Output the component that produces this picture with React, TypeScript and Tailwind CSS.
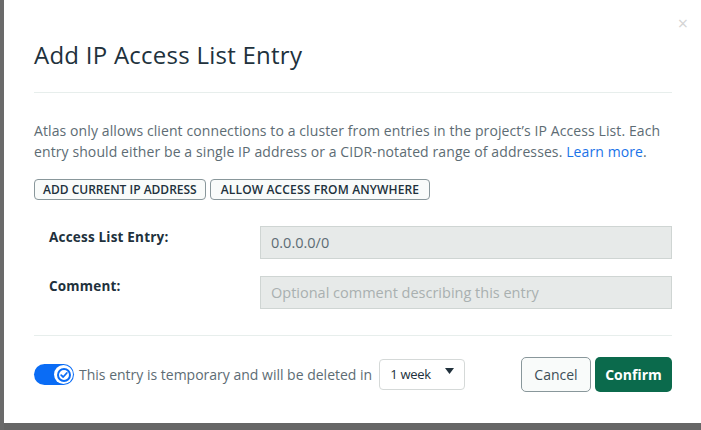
import React from "react"

const font = { fontFamily: "'Open Sans', 'Noto Sans', sans-serif" }

export default function App() {
  return (
    <div className="flex h-[430px] w-[701px] overflow-hidden bg-[#666666]" style={font}>
      <div className="flex w-[4px] shrink-0 flex-col bg-[#6a6a6a]" />
      <div className="relative mb-[7px] flex w-[720px] shrink-0 flex-col bg-white pl-[30px] pr-[49px]">
        <button className="absolute right-[36px] top-[14px] text-[18px] leading-none text-[#d4d4d4]">×</button>
        <h1 className="pt-[39px] text-[24px] leading-[32px] tracking-[0.25px] text-[#21313c]">Add IP Access List Entry</h1>
        <div className="mt-[21px] h-px w-[638px] bg-[#e7eeec]" />
        <p className="mt-[27px] w-[660px] text-[14px] leading-[21px] tracking-[0.1px] text-[#5d6c74]">
          Atlas only allows client connections to a cluster from entries in the project’s IP Access List. Each
          <br />
          entry should either be a single IP address or a CIDR-notated range of addresses.{" "}
          <a className="text-[#1a73e8]">Learn more</a>.
        </p>
        <div className="mt-[17px] flex gap-[4px]">
          <button className="h-[21px] rounded-[4px] border border-[#89979b] bg-[#f9fbfa] px-[8px] text-[12px] font-semibold leading-none text-[#21313c]">
            ADD CURRENT IP ADDRESS
          </button>
          <button className="h-[21px] rounded-[4px] border border-[#89979b] bg-[#f9fbfa] px-[10px] text-[12px] font-semibold leading-none tracking-[0.15px] text-[#21313c]">
            ALLOW ACCESS FROM ANYWHERE
          </button>
        </div>
        <div className="mt-[26px] flex w-[638px] flex-col gap-[17px]">
          <div className="flex items-start">
            <label className="w-[226px] pl-[15px] pt-[1px] text-[13.5px] font-bold leading-[20px] tracking-[0.2px] text-[#21313c]">
              Access List Entry:
            </label>
            <div className="flex h-[33px] flex-1 items-center border border-[#cfd5d3] bg-[#e7eae9] px-[10px] text-[14.5px] text-[#5d6c74]">
              0.0.0.0/0
            </div>
          </div>
          <div className="flex items-start">
            <label className="w-[226px] pl-[15px] pt-[0px] text-[13.5px] font-bold leading-[20px] tracking-[0.2px] text-[#21313c]">
              Comment:
            </label>
            <div className="flex h-[33px] flex-1 items-center border border-[#cfd5d3] bg-[#e7eae9] px-[10px] text-[14.5px] text-[#a9b0b0]">
              Optional comment describing this entry
            </div>
          </div>
        </div>
        <div className="mt-[26px] h-px w-[638px] bg-[#e7eeec]" />
        <div className="mt-[21px] flex w-[638px] items-center">
          <div className="relative h-[21px] w-[40px] rounded-full bg-[#0a6cf5]">
            <div className="absolute right-[1px] top-[1px] flex h-[19px] w-[19px] items-center justify-center rounded-full bg-white">
              <svg width="14" height="14" viewBox="0 0 14 14">
                <circle cx="7" cy="7" r="6" fill="none" stroke="#0a6cf5" strokeWidth="2" />
                <path d="M4.2 7.2 L6.2 9 L9.8 5" fill="none" stroke="#0a6cf5" strokeWidth="1.8" strokeLinecap="round" strokeLinejoin="round" />
              </svg>
            </div>
          </div>
          <span className="ml-[5px] text-[14px] text-[#5d6c74]">This entry is temporary and will be deleted in</span>
          <div className="relative ml-[7px] flex h-[31px] w-[86px] items-center rounded-[4px] border border-[#d5d9d8] bg-white pl-[10px] text-[13px] tracking-[-0.3px] text-[#21313c]">
            1 week
            <svg className="absolute right-[10px] top-[8px]" width="9" height="6" viewBox="0 0 9 6">
              <path d="M0 0 H9 L4.5 6 Z" fill="#21313c" />
            </svg>
          </div>
          <div className="ml-auto flex gap-[4px]">
            <button className="h-[35px] w-[70px] rounded-[5px] border border-[#89979b] bg-[#f9fbfa] text-[14px] text-[#3d4f58]">
              Cancel
            </button>
            <button className="h-[35px] w-[77px] rounded-[5px] bg-[#0b6a4c] text-[14px] font-bold text-white">
              Confirm
            </button>
          </div>
        </div>
      </div>
    </div>
  )
}
